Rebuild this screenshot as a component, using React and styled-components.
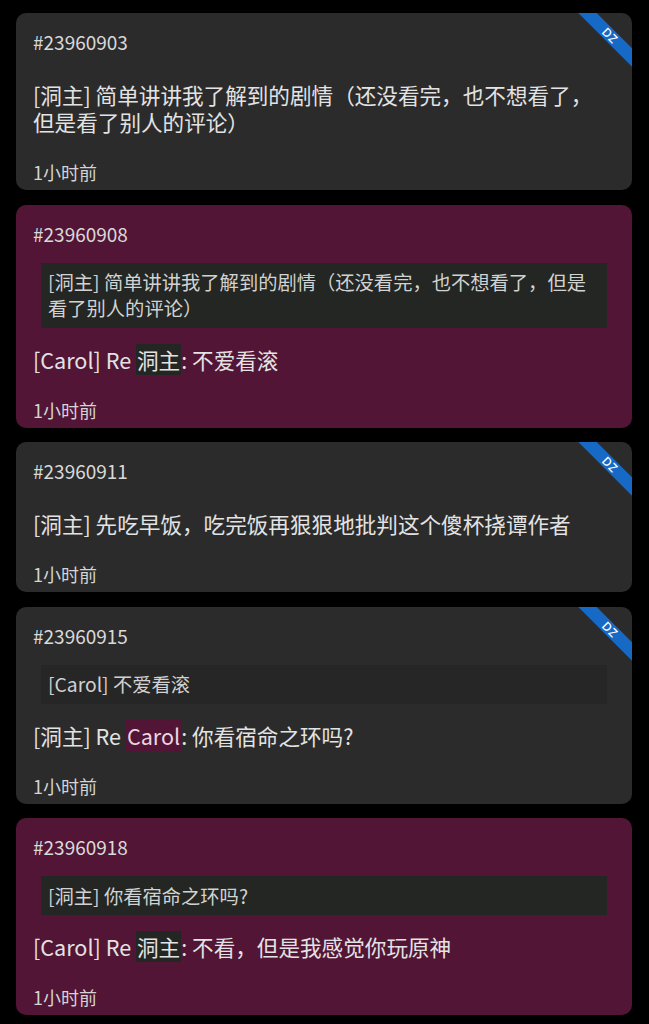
import React from 'react';
import styled, { createGlobalStyle } from 'styled-components';

const Global = createGlobalStyle`
	body {
		margin: 0;
		background: #000;
		font-family: "Noto Sans CJK SC", "Noto Sans", sans-serif;
	}
`;

const List = styled.div`
	display: flex;
	flex-direction: column;
	gap: 14.5px;
	padding: 13px 17px 13px 16px;
`;

const Card = styled.div`
	position: relative;
	overflow: hidden;
	border-radius: 10px;
	padding: 16px 16px 6px 17px;
	background: ${p => (p.$pink ? '#521535' : '#2b2b2b')};
	color: #e2e2e2;
`;

const PostId = styled.div`
	font-size: 19px;
	line-height: 26px;
	color: #d9d9d9;
	margin-bottom: 16px;
`;

const Quote = styled.div`
	margin: 0 9px 8px 8px;
	padding: 6.5px 7px;
	font-size: 19.3px;
	line-height: 26px;
	color: #d2d2d2;
	background: ${p => (p.$pink ? '#232623' : '#262626')};
`;

const Body = styled.div`
	padding: 10px 6px 0 0;
	font-size: 21.6px;
	line-height: 27px;
	color: #e3e3e3;
`;

const Mention = styled.span`
	padding: 0 1px;
	background: ${p => (p.$pink ? '#521535' : '#232623')};
	color: ${p => (p.$pink ? '#ecd6e3' : '#e3e3e3')};
`;

const Time = styled.div`
	margin-top: 25px;
	font-size: 18px;
	line-height: 24px;
	color: #d4d4d4;
`;

const Ribbon = styled.div`
	position: absolute;
	top: 16px;
	right: -28px;
	width: 100px;
	height: 13px;
	transform: rotate(45deg);
	background: #1769c6;
	color: #fff;
	font-family: "Noto Sans", sans-serif;
	font-size: 12px;
	line-height: 13px;
	font-weight: 500;
	text-align: center;
	letter-spacing: 0.5px;
`;

const posts = [
	{
		id: '23960903',
		dz: true,
		body: '[洞主] 简单讲讲我了解到的剧情（还没看完，也不想看了，但是看了别人的评论）',
	},
	{
		id: '23960908',
		pink: true,
		quote: '[洞主] 简单讲讲我了解到的剧情（还没看完，也不想看了，但是看了别人的评论）',
		author: '[Carol] Re ',
		mention: '洞主',
		body: ': 不爱看滚',
	},
	{
		id: '23960911',
		dz: true,
		body: '[洞主] 先吃早饭，吃完饭再狠狠地批判这个傻杯挠谭作者',
	},
	{
		id: '23960915',
		dz: true,
		quote: '[Carol] 不爱看滚',
		author: '[洞主] Re ',
		mention: 'Carol',
		mentionPink: true,
		body: ': 你看宿命之环吗?',
	},
	{
		id: '23960918',
		pink: true,
		quote: '[洞主] 你看宿命之环吗?',
		author: '[Carol] Re ',
		mention: '洞主',
		body: ': 不看，但是我感觉你玩原神',
	},
];

const App = () => {
	return (
		<>
			<Global />
			<List>
				{posts.map(p => (
					<Card key={p.id} $pink={p.pink}>
						{p.dz && <Ribbon>DZ</Ribbon>}
						<PostId>#{p.id}</PostId>
						{p.quote && <Quote $pink={p.pink}>{p.quote}</Quote>}
						<Body>
							{p.author}
							{p.mention && <Mention $pink={p.mentionPink}>{p.mention}</Mention>}
							{p.body}
						</Body>
						<Time>1小时前</Time>
					</Card>
				))}
			</List>
		</>
	);
};

export default App;
